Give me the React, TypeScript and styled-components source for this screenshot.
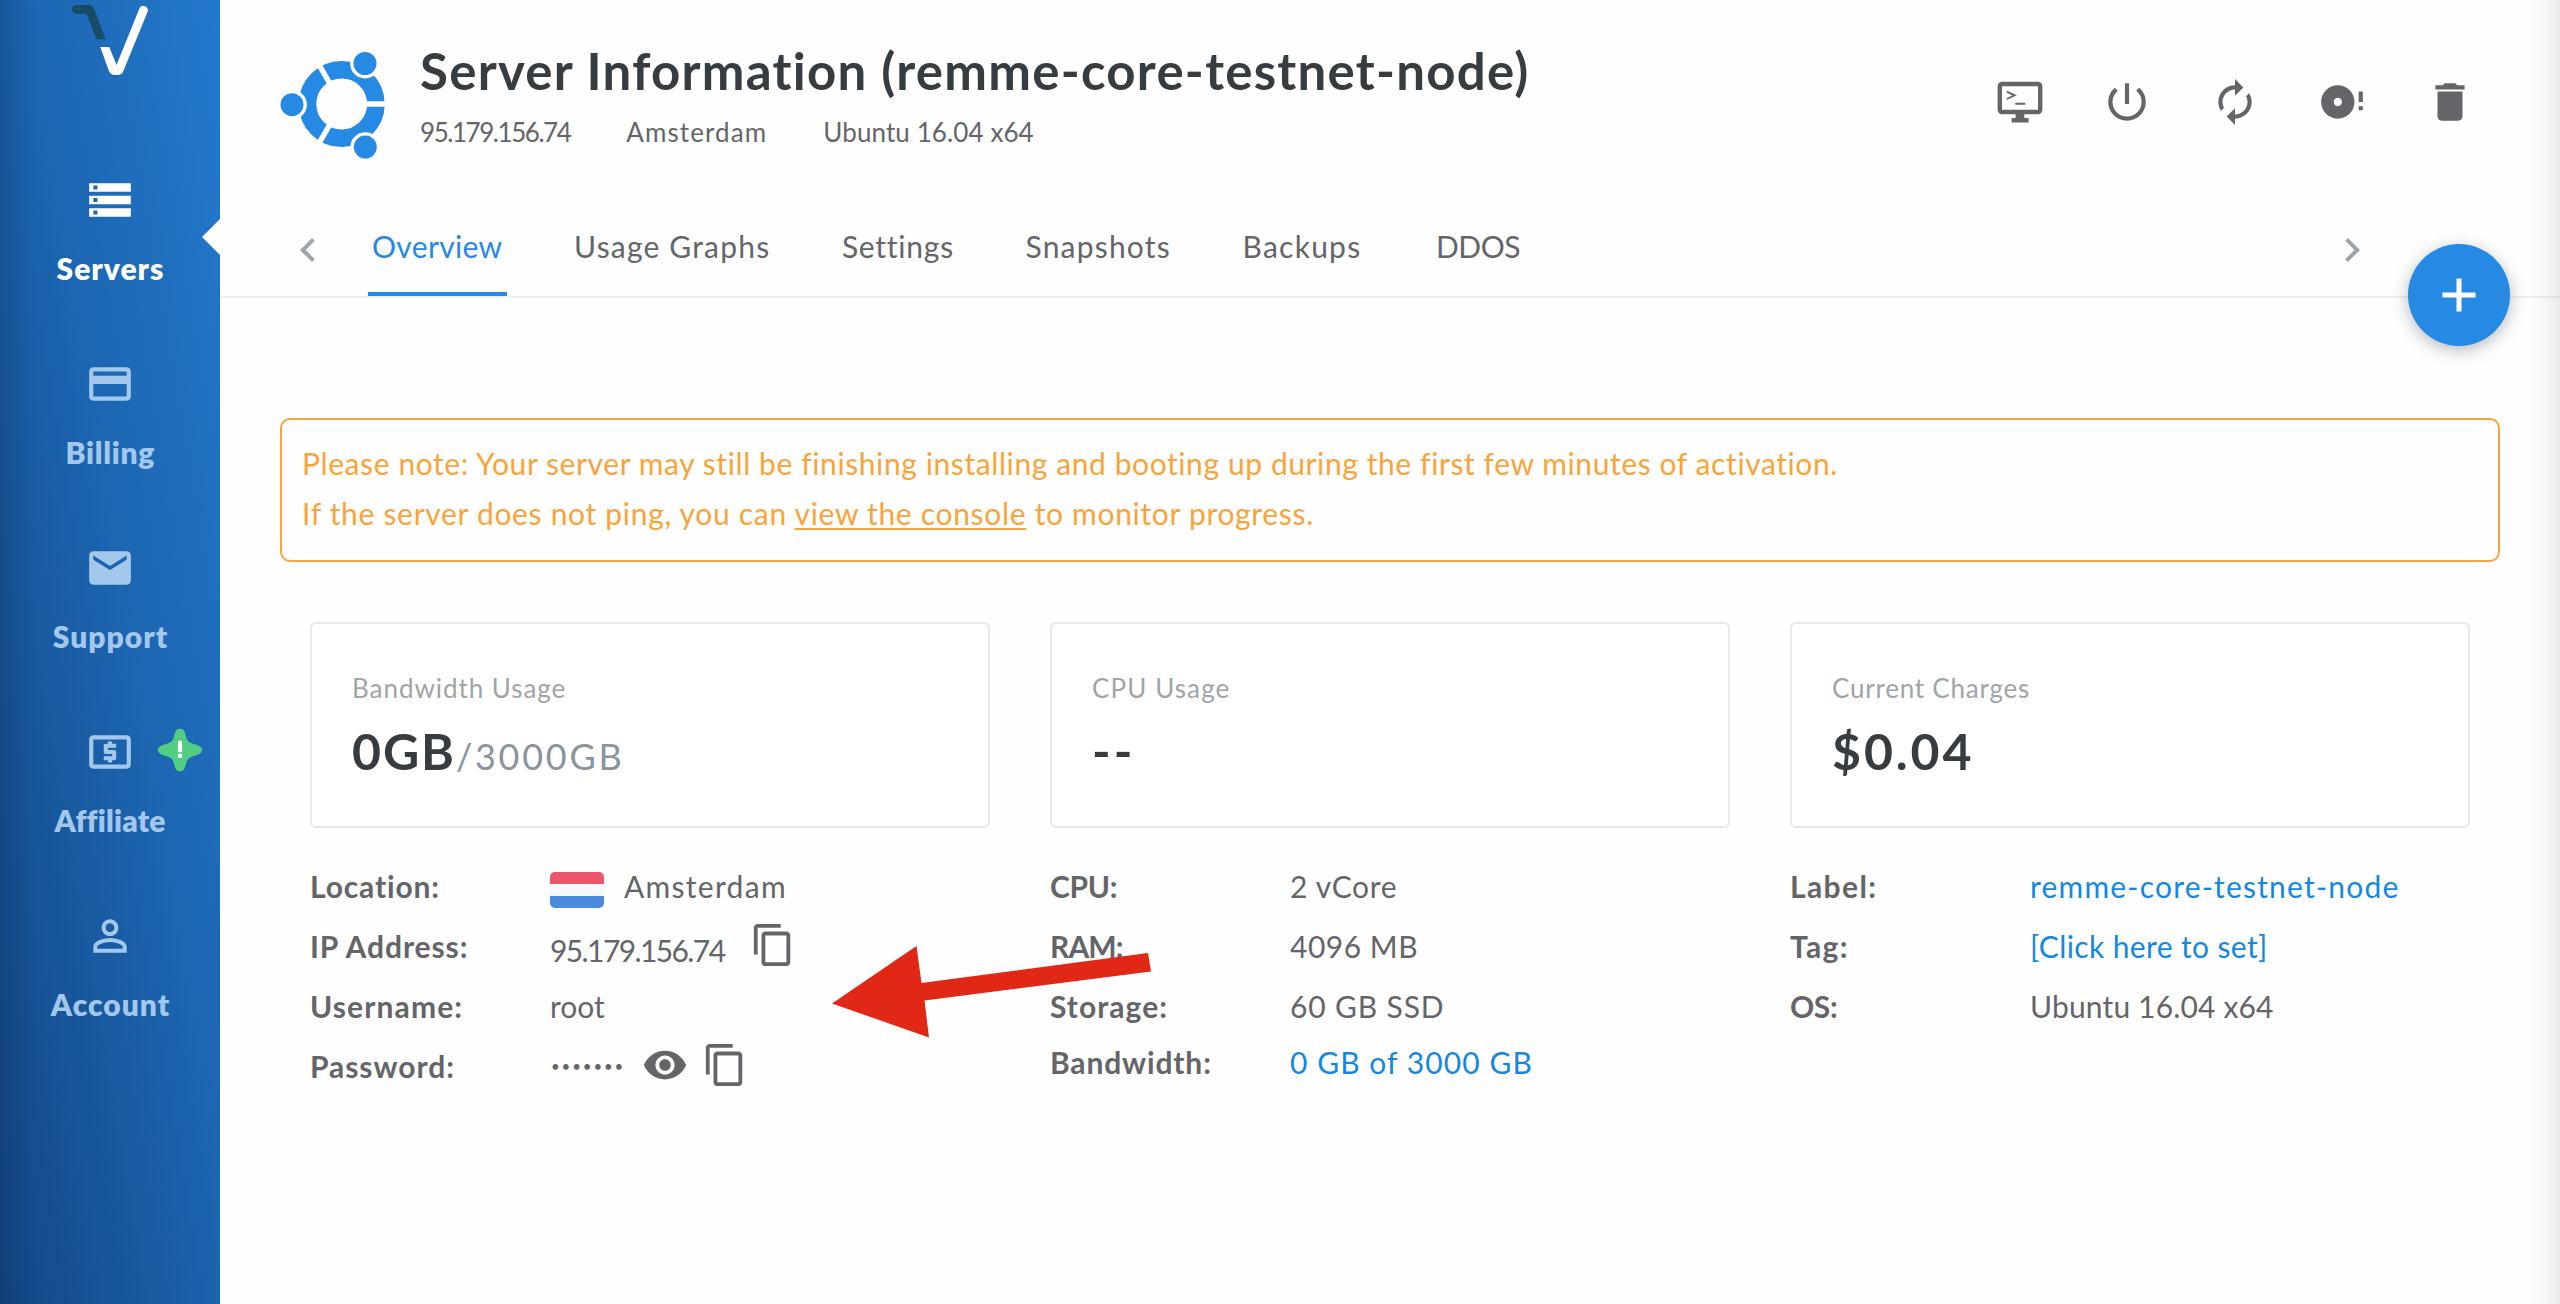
import React, { ReactNode } from 'react';
import styled, { createGlobalStyle } from 'styled-components';
import {
  MdStorage,
  MdCreditCard,
  MdEmail,
  MdLocalAtm,
  MdPersonOutline,
  MdPowerSettingsNew,
  MdAutorenew,
  MdDiscFull,
  MdDelete,
  MdChevronLeft,
  MdChevronRight,
  MdContentCopy,
  MdRemoveRedEye,
} from 'react-icons/md';

const color = {
  text: '#646569',
  dark: '#373c40',
  muted: '#9ea4a8',
  slate: '#8a949c',
  line: '#e5e9ed',
  blue: '#268ae4',
  link: '#1488e0',
  orange: '#f9a43a',
  navIdle: '#a3c8ec',
};

const GlobalStyle = createGlobalStyle`
  * { box-sizing: border-box; }
  body {
    margin: 0;
    background: #fff;
    font-family: Lato, 'Open Sans', sans-serif;
    font-size: 30px;
    color: ${color.text};
  }
`;

const Page = styled.div`
  position: relative;
  display: flex;
  width: 2560px;
  height: 1304px;
  overflow: hidden;
  background: #fefefe;
`;

const EdgeShade = styled.div`
  position: absolute;
  top: 0;
  right: 0;
  width: 32px;
  height: 100%;
  background: linear-gradient(to right, rgba(60, 70, 70, 0), rgba(60, 70, 70, 0.03) 45%, rgba(60, 70, 70, 0.11));
`;

/* Text whose letter spacing is set per string */
const Text = styled.span<{ $track?: number }>`
  white-space: nowrap;
  letter-spacing: ${(p) => p.$track ?? 0}px;
`;

/* ---------- Sidebar ---------- */

const Sidebar = styled.nav`
  display: flex;
  flex-direction: column;
  flex: none;
  width: 220px;
  background:
    linear-gradient(to right, rgba(10, 30, 60, 0.17), rgba(10, 30, 60, 0) 34px),
    linear-gradient(to bottom left, #2379cd, #1c65b1 45%, #134684);
`;

const Brand = styled.div`
  height: 145px;
  flex: none;
`;

const NavItem = styled.a<{ $active?: boolean }>`
  position: relative;
  display: flex;
  flex-direction: column;
  align-items: center;
  height: 184px;
  padding-top: 30px;
  color: ${(p) => (p.$active ? '#fff' : color.navIdle)};
  font-weight: 800;
  svg { flex: none; }
`;

const NavLabel = styled.span<{ $track: number }>`
  margin-top: 24px;
  line-height: 38px;
  letter-spacing: ${(p) => p.$track}px;
  margin-right: ${(p) => -p.$track}px;
`;

const Notch = styled.span`
  position: absolute;
  right: 0;
  top: 74px;
  border: 18px solid transparent;
  border-left: 0;
  border-right-color: #fefefe;
`;

const Badge = styled.span`
  position: absolute;
  left: 158px;
  top: 31px;
  width: 44px;
  height: 44px;
`;

/* ---------- Header ---------- */

const Main = styled.main`
  flex: 1;
  display: flex;
  flex-direction: column;
  min-width: 0;
`;

const Header = styled.header`
  display: flex;
  height: 200px;
  padding: 40px 85.5px 0 60px;
`;

const TitleBlock = styled.div`
  display: flex;
  flex-direction: column;
  margin-left: 30px;
`;

const Title = styled.h1`
  margin: 0;
  font-size: 51px;
  font-weight: 700;
  line-height: 62px;
  letter-spacing: 1.25px;
  white-space: nowrap;
  color: ${color.dark};
`;

const Meta = styled.div`
  display: flex;
  margin-top: 12px;
  gap: 56px;
  font-size: 26px;
  line-height: 36px;
`;

const Actions = styled.div`
  display: flex;
  gap: 57.5px;
  margin: 37px 0 0 auto;
  height: 50px;
  svg { flex: none; }
`;

/* ---------- Tabs ---------- */

const TabBar = styled.div`
  position: relative;
  display: flex;
  flex: none;
  height: 98px;
  padding: 0 184px 0 64px;
  border-bottom: 2px solid #ecf0f4;
`;

const Arrow = styled.button`
  display: flex;
  flex: none;
  margin: 26px 0 0;
  padding: 0;
  width: 48px;
  height: 48px;
  border: 0;
  background: none;
  color: ${color.muted};
`;

const Tabs = styled.div`
  display: flex;
  gap: 63.6px;
  flex: 1;
  margin-left: 36px;
`;

const Tab = styled.a<{ $active?: boolean }>`
  display: flex;
  align-items: center;
  height: 96px;
  padding: 0 4px;
  border-bottom: 4px solid ${(p) => (p.$active ? color.blue : 'transparent')};
  color: ${(p) => (p.$active ? color.blue : color.text)};
  &:last-child { margin-left: 3px; }
`;

const AddButton = styled.button`
  position: absolute;
  right: 50px;
  top: 44px;
  width: 102px;
  height: 102px;
  padding: 0;
  border: 0;
  border-radius: 50%;
  background: ${color.blue};
  box-shadow: 0 4px 16px rgba(50, 60, 70, 0.36);
  display: flex;
  align-items: center;
  justify-content: center;
`;

/* ---------- Body ---------- */

const Notice = styled.section`
  margin: 120px 60px 0;
  height: 144px;
  padding: 18px 20px;
  border: 2px solid ${color.orange};
  border-radius: 10px;
  color: ${color.orange};
  line-height: 50px;
`;

const NoticeLine = styled.div<{ $track: number }>`
  letter-spacing: ${(p) => p.$track}px;
  white-space: nowrap;
`;

const NoticeLink = styled.a`
  text-decoration: underline;
  text-decoration-thickness: 2px;
  text-underline-offset: 3px;
  text-decoration-skip-ink: none;
`;

const Columns = styled.div`
  display: grid;
  grid-template-columns: repeat(3, 680px);
  column-gap: 60px;
  margin: 60px 0 0 90px;
`;

const Card = styled.div`
  display: flex;
  flex-direction: column;
  height: 206px;
  padding: 46px 40px 0;
  border: 2px solid ${color.line};
  border-radius: 6px;
  background: #fff;
`;

const CardLabel = styled.div`
  font-size: 26px;
  line-height: 36px;
  color: ${color.muted};
`;

const CardValue = styled.div`
  display: flex;
  align-items: baseline;
  margin-top: 15px;
  font-size: 50px;
  font-weight: 700;
  line-height: 60px;
  color: ${color.dark};
`;

const CardLimit = styled.span`
  font-size: 36px;
  font-weight: 400;
  letter-spacing: 2.75px;
  color: ${color.slate};
`;

const Details = styled.dl`
  display: flex;
  flex-direction: column;
  margin: 0;
  padding-top: 28px;
`;

const Row = styled.div<{ $short?: boolean }>`
  display: grid;
  grid-template-columns: 240px auto;
  align-items: center;
  height: ${(p) => (p.$short ? 52 : 60)}px;
`;

const Label = styled.dt`
  font-weight: 700;
`;

const Value = styled.dd<{ $link?: boolean }>`
  display: flex;
  align-items: center;
  margin: 0;
  color: ${(p) => (p.$link ? color.link : 'inherit')};
`;

const Flag = styled.span`
  width: 54px;
  height: 36px;
  margin: 7px 20px 0 0;
  border-radius: 5px;
  background: linear-gradient(#ec5669 0 11.5px, #f5f7fa 12.5px 23.5px, #4c8bdc 24.5px);
`;

const Address = styled(Text)`
  width: 175px;
  margin: 8px 25px 0 0;
`;

const Dots = styled.span`
  width: 92px;
  padding-left: 1px;
  font-size: 15px;
  line-height: 20px;
  letter-spacing: 1.9px;
`;

const IconSlot = styled.span<{ $gap?: number }>`
  display: flex;
  margin: -2px 0 0 ${(p) => p.$gap ?? 0}px;
`;

const Pointer = styled.svg`
  position: absolute;
  left: 820px;
  top: 930px;
`;

/* ---------- Drawings ---------- */

const BrandMark = () => (
  <svg width="220" height="80" viewBox="0 0 220 80">
    <path
      fill="#174b66"
      d="M76.3 5H88.5q3.9 0 5.4 3.6L105.6 39.2H96.6L86.3 13.8H76.3a4.4 4.4 0 0 1 0-8.8z"
    />
    <path
      fill="#fff"
      d="M100.3 47H109.3L116.5 65 139.6 8a4.45 4.45 0 0 1 8.1 3.4L123.6 70.4q-1.9 4.6-6 4.6H114.500q-4 0-5.800-4.400z"
    />
  </svg>
);

const StarBadge = () => (
  <svg width="44" height="44" viewBox="0 0 44 44">
    <path
      fill="#52cd81"
      d="M22 0.700C26 0.700 27 4 28 8.500C29 13 31 14.500 36 16C40.500 17.300 44 18.500 44 22C44 25.500 40.500 26.700 36 28C31 29.500 29 31 28 35.500C27 40 26 43.300 22 43.300C18 43.300 17 40 16 35.500C15 31 13 29.500 8 28C3.500 26.700 0 25.500 0 22C0 18.500 3.500 17.300 8 16C13 14.500 15 13 16 8.500C17 4 18 0.700 22 0.700Z"
    />
    <rect x="19.900" y="12.600" width="4.200" height="11.600" rx="1.800" fill="#fff" />
    <circle cx="22" cy="27.700" r="2.300" fill="#fff" />
  </svg>
);

const UbuntuMark = () => (
  <svg width="110" height="120" viewBox="10 0 110 120">
    <circle cx="71.700" cy="64" r="34.200" fill="none" stroke={color.blue} strokeWidth="17.600" />
    <path
      d="M71.700 64H120M71.700 64L46.200 19.800M71.700 64L46.200 108.200"
      stroke="#fefefe"
      strokeWidth="5.400"
    />
    <g fill={color.blue} stroke="#fefefe" strokeWidth="3.400">
      <circle cx="22" cy="64.700" r="13.200" />
      <circle cx="95" cy="23.500" r="13.200" />
      <circle cx="95.300" cy="107.100" r="13.200" />
    </g>
  </svg>
);

const ConsoleIcon = () => (
  <svg width="50" height="50" viewBox="0 0 50 50">
    <rect x="4.800" y="7" width="40.400" height="28" rx="2.200" fill="none" stroke="currentColor" strokeWidth="4.400" />
    <path fill="currentColor" d="M20.600 37h8.700v4.100h4.300v4.300h-17v-4.300h4z" />
    <path d="M11.800 14.600L19.600 18.300L11.800 22M20.300 26.700H30.300" fill="none" stroke="currentColor" strokeWidth="1.900" />
  </svg>
);

const PlusIcon = () => (
  <svg width="34" height="34" viewBox="0 0 34 34">
    <path d="M17 .500V33.500M.500 17H33.500" stroke="#fff" strokeWidth="5" />
  </svg>
);

/* ---------- Data ---------- */

const nav: { label: string; icon: ReactNode; track: number; active?: boolean; badge?: boolean }[] = [
  { label: 'Servers', icon: <MdStorage size={50} />, track: 1, active: true },
  { label: 'Billing', icon: <MdCreditCard size={50} />, track: 0.7 },
  { label: 'Support', icon: <MdEmail size={50} />, track: 1 },
  { label: 'Affiliate', icon: <MdLocalAtm size={50} />, track: 0.2, badge: true },
  { label: 'Account', icon: <MdPersonOutline size={50} />, track: 1 },
];

const tabs = [
  { label: 'Overview', track: 0.35 },
  { label: 'Usage Graphs', track: 1.19 },
  { label: 'Settings', track: 0.75 },
  { label: 'Snapshots', track: 1.2 },
  { label: 'Backups', track: 1.25 },
  { label: 'DDOS', track: -0.5 },
];

export default function App() {
  return (
    <Page>
      <GlobalStyle />
      <Sidebar>
        <Brand>
          <BrandMark />
        </Brand>
        {nav.map((n) => (
          <NavItem key={n.label} $active={n.active}>
            {n.icon}
            <NavLabel $track={n.track}>{n.label}</NavLabel>
            {n.active && <Notch />}
            {n.badge && (
              <Badge>
                <StarBadge />
              </Badge>
            )}
          </NavItem>
        ))}
      </Sidebar>

      <Main>
        <Header>
          <UbuntuMark />
          <TitleBlock>
            <Title>Server Information (remme-core-testnet-node)</Title>
            <Meta>
              <Text $track={-1.45}>95.179.156.74</Text>
              <Text $track={1.1}>Amsterdam</Text>
              <Text $track={0.1}>Ubuntu 16.04 x64</Text>
            </Meta>
          </TitleBlock>
          <Actions>
            <ConsoleIcon />
            <MdPowerSettingsNew size={50} />
            <MdAutorenew size={50} />
            <MdDiscFull size={50} />
            <MdDelete size={50} />
          </Actions>
        </Header>

        <TabBar>
          <Arrow>
            <MdChevronLeft size={48} />
          </Arrow>
          <Tabs>
            {tabs.map((t, i) => (
              <Tab key={t.label} $active={i === 0}>
                <Text $track={t.track}>{t.label}</Text>
              </Tab>
            ))}
          </Tabs>
          <Arrow>
            <MdChevronRight size={48} />
          </Arrow>
          <AddButton>
            <PlusIcon />
          </AddButton>
        </TabBar>

        <Notice>
          <NoticeLine $track={0.59}>
            Please note: Your server may still be finishing installing and booting up during the first few minutes of
            activation.
          </NoticeLine>
          <NoticeLine $track={0.69}>
            If the server does not ping, you can <NoticeLink>view the console</NoticeLink> to monitor progress.
          </NoticeLine>
        </Notice>

        <Columns>
          <Card>
            <CardLabel>
              <Text $track={0.95}>Bandwidth Usage</Text>
            </CardLabel>
            <CardValue>
              <Text $track={1.9}>0GB</Text>
              <CardLimit>/3000GB</CardLimit>
            </CardValue>
          </Card>
          <Card>
            <CardLabel>
              <Text $track={1.1}>CPU Usage</Text>
            </CardLabel>
            <CardValue>
              <Text $track={3}>--</Text>
            </CardValue>
          </Card>
          <Card>
            <CardLabel>
              <Text $track={0.78}>Current Charges</Text>
            </CardLabel>
            <CardValue>
              <Text $track={2.9}>$0.04</Text>
            </CardValue>
          </Card>

          <Details>
            <Row>
              <Label><Text $track={0.85}>Location:</Text></Label>
              <Value>
                <Flag />
                <Text $track={1.3}>Amsterdam</Text>
              </Value>
            </Row>
            <Row>
              <Label><Text $track={0.9}>IP Address:</Text></Label>
              <Value>
                <Address $track={-1.6}>95.179.156.74</Address>
                <IconSlot><MdContentCopy size={46} /></IconSlot>
              </Value>
            </Row>
            <Row>
              <Label><Text $track={1.13}>Username:</Text></Label>
              <Value><Text $track={0}>root</Text></Value>
            </Row>
            <Row>
              <Label><Text $track={0.95}>Password:</Text></Label>
              <Value>
                <Dots>•••••••</Dots>
                <IconSlot><MdRemoveRedEye size={46} /></IconSlot>
                <IconSlot $gap={14}><MdContentCopy size={46} /></IconSlot>
              </Value>
            </Row>
          </Details>

          <Details>
            <Row>
              <Label><Text $track={-0.3}>CPU:</Text></Label>
              <Value><Text $track={0.65}>2 vCore</Text></Value>
            </Row>
            <Row>
              <Label><Text $track={-0.9}>RAM:</Text></Label>
              <Value><Text $track={0.5}>4096 MB</Text></Value>
            </Row>
            <Row>
              <Label><Text $track={1.05}>Storage:</Text></Label>
              <Value><Text $track={0.85}>60 GB SSD</Text></Value>
            </Row>
            <Row $short>
              <Label><Text $track={0.85}>Bandwidth:</Text></Label>
              <Value $link><Text $track={1.06}>0 GB of 3000 GB</Text></Value>
            </Row>
          </Details>

          <Details>
            <Row>
              <Label><Text $track={1.4}>Label:</Text></Label>
              <Value $link><Text $track={1.2}>remme-core-testnet-node</Text></Value>
            </Row>
            <Row>
              <Label><Text $track={1.35}>Tag:</Text></Label>
              <Value $link><Text $track={0.38}>[Click here to set]</Text></Value>
            </Row>
            <Row>
              <Label><Text $track={-0.4}>OS:</Text></Label>
              <Value><Text $track={0.16}>Ubuntu 16.04 x64</Text></Value>
            </Row>
          </Details>
        </Columns>
      </Main>

      <Pointer width="340" height="120" viewBox="820 930 340 120">
        <path fill="#e12817" d="M832 1003.500L916.500 946 921.500 983 1148 953 1151 971.500 924.500 1000.500 929 1037.500z" />
      </Pointer>
      <EdgeShade />
    </Page>
  );
}
